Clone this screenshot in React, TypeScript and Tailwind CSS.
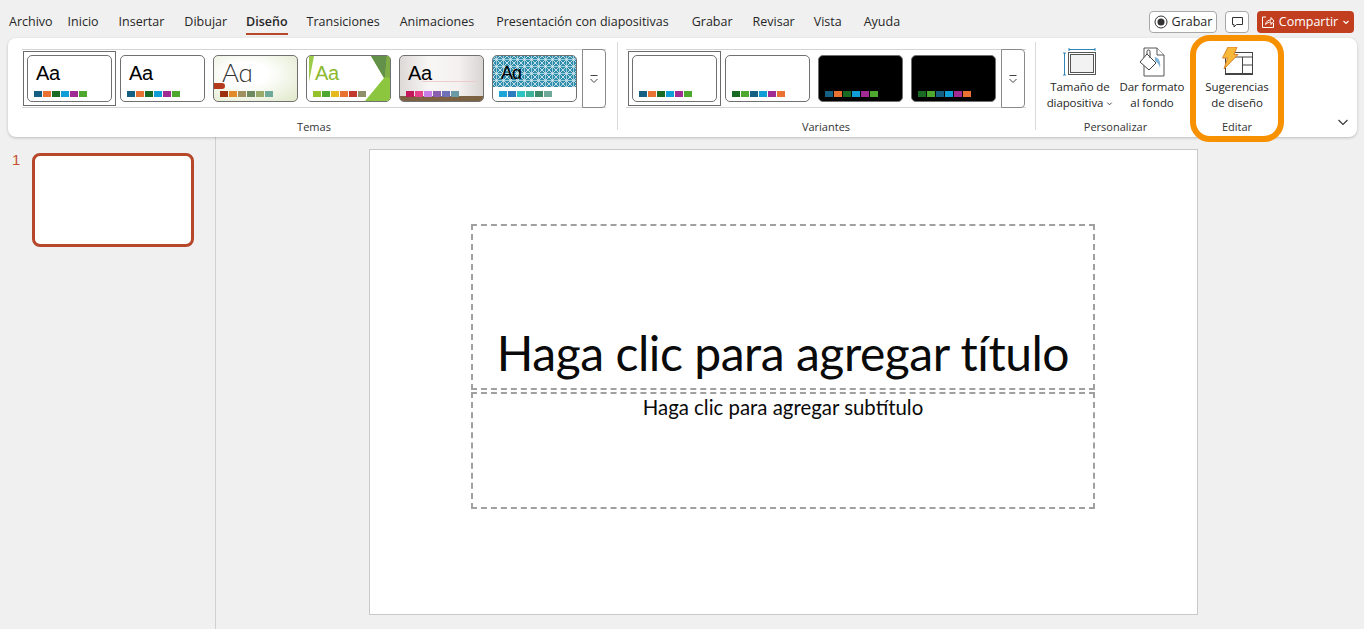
import { ReactNode } from 'react'

const tabs = [
  { label: 'Archivo', gap: 'ml-[9px]' },
  { label: 'Inicio', gap: 'ml-[15px]' },
  { label: 'Insertar', gap: 'ml-[20px]' },
  { label: 'Dibujar', gap: 'ml-[20px]' },
  { label: 'Diseño', gap: 'ml-[19px]', active: true },
  { label: 'Transiciones', gap: 'ml-[19px]' },
  { label: 'Animaciones', gap: 'ml-[20px]' },
  { label: 'Presentación con diapositivas', gap: 'ml-[22px]' },
  { label: 'Grabar', gap: 'ml-[23px]' },
  { label: 'Revisar', gap: 'ml-[20px]' },
  { label: 'Vista', gap: 'ml-[19px]' },
  { label: 'Ayuda', gap: 'ml-[22px]' },
]

const office = ['#156082', '#e97132', '#196b24', '#0f9ed5', '#a02b93', '#4ea72e']
const officeAlt = ['#196b24', '#4ea72e', '#156082', '#0f9ed5', '#a02b93', '#e97132']

function Swatches({ colors }: { colors: string[] }) {
  return (
    <div className="flex gap-px">
      {colors.map((c, i) => (
        <div key={i} className="w-[8px] h-[6px]" style={{ backgroundColor: c }} />
      ))}
    </div>
  )
}

function Thumb({
  colors,
  selected,
  bg = 'bg-white',
  art,
  children,
}: {
  colors: string[]
  selected?: boolean
  bg?: string
  art?: ReactNode
  children?: ReactNode
}) {
  return (
    <div className={`w-[93px] h-[55px] flex items-center justify-center border ${selected ? 'border-[#6b6b6b]' : 'border-transparent'}`}>
      <div className={`relative w-[85px] h-[47px] rounded-[5px] border border-[#707070] overflow-hidden ${bg}`}>
        {art}
        <div className="relative flex flex-col h-full pl-[6px] pt-[4px]">
          <div className="h-[31px]">{children}</div>
          <Swatches colors={colors} />
        </div>
      </div>
    </div>
  )
}

function Aa({ className = '', text = 'Aa' }: { className?: string; text?: string }) {
  return <div className={`text-[20px] leading-[26px] pl-[2px] tracking-[-0.4px] ${className}`}>{text}</div>
}

function MoreButton() {
  return (
    <div className="ml-px w-[24px] h-[59px] -my-px border border-[#8a8a8a] rounded-r-[4px] bg-white flex items-center justify-center">
      <svg width="10" height="10" viewBox="0 0 10 10" fill="none" stroke="#444" strokeWidth="1">
        <path d="M1.5 1.5h7M1.5 5l3.5 3.5L8.5 5" />
      </svg>
    </div>
  )
}

function GreenArt() {
  return (
    <svg className="absolute inset-0" width="83" height="45" viewBox="0 0 83 45">
      <path d="M2 0h5L2 26z" fill="#9ccb4a" />
      <path d="M64 0H83V45H58L77 22z" fill="#8cc63f" />
      <path d="M64 0H80L78 21l-1 1z" fill="#63914a" />
      <path d="M80 0h3v22l-5-1z" fill="#7fae45" />
    </svg>
  )
}

function PatternArt() {
  return (
    <svg className="absolute inset-x-0 top-0" width="83" height="31" viewBox="0 0 83 31">
      <defs>
        <pattern id="tiles" width="7" height="7" patternUnits="userSpaceOnUse">
          <rect width="7" height="7" fill="#2f8fad" />
          <path d="M3.5 0.5L6.5 3.5 3.5 6.5 0.5 3.5z" fill="#1c7d9b" />
          <path d="M3.5 0v7M0 3.5h7" stroke="#bfe0ea" strokeWidth="0.8" />
          <path d="M0 0l7 7M7 0L0 7" stroke="#e6f3f7" strokeWidth="0.8" />
        </pattern>
      </defs>
      <rect width="83" height="31" fill="url(#tiles)" />
    </svg>
  )
}

function RibbonLabel({ children }: { children: ReactNode }) {
  return <div className="h-[14px] leading-[14px] text-[11px] text-center text-[#333]">{children}</div>
}

function Separator() {
  return <div className="w-px h-[88px] mt-[4px] bg-[#d9d9d9]" />
}

function SlideSizeIcon() {
  return (
    <svg width="34" height="28" viewBox="0 0 34 28" fill="none">
      <path d="M6 1.5h26M6 0v3M32 0v3M1.5 5v22M0 5h3M0 27h3" stroke="#2e86b8" strokeWidth="1" />
      <rect x="5.5" y="4.5" width="27" height="22" stroke="#555" strokeWidth="1" fill="#fff" />
      <rect x="7.5" y="6.5" width="23" height="18" stroke="#555" strokeWidth="1" fill="#f2f2f2" />
    </svg>
  )
}

function FormatBgIcon() {
  return (
    <svg width="28" height="30" viewBox="0 0 28 30" fill="none">
      <path d="M6 1h13l7 7v21H6z" fill="#fff" stroke="#555" strokeWidth="1" />
      <path d="M19 1v7h7" stroke="#555" strokeWidth="1" fill="#fff" />
      <path d="M9 7l9 9-7 7-9-8z" fill="#fff" stroke="#444" strokeWidth="1" />
      <path d="M9 8V4.5a1.5 1.5 0 0 1 3 0V11" stroke="#444" strokeWidth="1" />
      <path d="M17 10c4 1 6 5 5 11-1-4-3-6-5-7z" fill="#7fb2d9" />
    </svg>
  )
}

function DesignerIcon() {
  return (
    <svg width="32" height="30" viewBox="0 0 32 30" fill="none">
      <rect x="4.5" y="5.5" width="27" height="21" fill="#fff" stroke="#444" strokeWidth="1" />
      <path d="M4 10h27M21.5 10v16M21.5 18h10" stroke="#444" strokeWidth="1" />
      <rect x="4" y="26" width="28" height="2" fill="#444" />
      <path d="M7 0h9l-3 7.5h4L3 22l3.5-11H1.500z" fill="#f8b93a" stroke="#d9822b" strokeWidth="1" />
    </svg>
  )
}

export default function App() {
  return (
    <div className="w-[1364px] h-[629px] overflow-hidden bg-[#f0f0f0] font-['Open_Sans',sans-serif] text-[#262626] flex flex-col relative">
      {/* Menu bar */}
      <div className="h-[38px] flex shrink-0 text-[12.5px]">
        {tabs.map(t => (
          <div
            key={t.label}
            className={`${t.gap} pt-[11px] h-[35px] leading-[22px] border-b-2 whitespace-nowrap ${t.active ? 'border-[#b7472a] font-semibold' : 'border-transparent'}`}
          >
            {t.label}
          </div>
        ))}
        <div className="ml-auto mr-[10px] mt-[11px] flex gap-[8px] h-[22px]">
          <div className="w-[68px] flex items-center justify-center gap-[4px] bg-white border border-[#a8a8a8] rounded-[4px] text-[12.5px]">
            <svg width="14" height="14" viewBox="0 0 14 14" fill="none">
              <circle cx="7" cy="7" r="6" stroke="#333" strokeWidth="1" />
              <circle cx="7" cy="7" r="3.5" fill="#333" />
            </svg>
            Grabar
          </div>
          <div className="w-[24px] flex items-center justify-center bg-white border border-[#a8a8a8] rounded-[4px]">
            <svg width="13" height="13" viewBox="0 0 13 13" fill="none" stroke="#333" strokeWidth="1">
              <path d="M1.5 1.5h10v7H5.500L3 11V8.500H1.500z" />
            </svg>
          </div>
          <div className="w-[97px] flex items-center justify-center gap-[4px] bg-[#c13f1f] rounded-[4px] text-white text-[12.5px]">
            <svg width="14" height="14" viewBox="0 0 14 14" fill="none" stroke="#fff" strokeWidth="1">
              <path d="M5 2H1.500v10.500h11V8" />
              <path d="M4.500 9.500C5 6.500 7 5 10 5V2.500L13 6l-3 3.500V7C8 7 6 8 4.500 9.500z" />
            </svg>
            Compartir
            <svg width="8" height="8" viewBox="0 0 8 8" fill="none" stroke="#fff" strokeWidth="1.2">
              <path d="M1.500 3l2.500 2.500L6.500 3" />
            </svg>
          </div>
        </div>
      </div>

      {/* Ribbon */}
      <div className="relative z-10 ml-[8px] w-[1349px] h-[99px] shrink-0 bg-white rounded-[8px] shadow-[0_1px_3px_rgba(0,0,0,0.22)] flex text-[11.5px]">
        {/* Temas */}
        <div className="ml-[14px] mt-[11px] w-[584px] flex flex-col">
          <div className="flex items-center h-[59px] border-y border-[#d4d4d4] pl-px">
            <Thumb colors={office} selected>
              <Aa className="text-black font-['Liberation_Sans',sans-serif]" />
            </Thumb>
            <Thumb colors={office}>
              <Aa className="text-black font-['Liberation_Sans',sans-serif]" />
            </Thumb>
            <Thumb
              colors={['#9c2f0e', '#e08a2a', '#a08f5f', '#6f8a5f', '#9aaa6a', '#6fa99a']}
              bg="bg-[radial-gradient(ellipse_at_40%_40%,#ffffff_30%,#dfe8c9_100%)]"
              art={<div className="absolute left-0 top-[27px] w-[11px] h-[6px] rounded-r-[3px] bg-[#b5391b]" />}
            >
              <div className="text-[26px] leading-[24px] pl-[2px] tracking-[-0.5px] text-[#333] font-light font-['Lato',sans-serif]">Aɑ</div>
            </Thumb>
            <Thumb colors={['#95c12b', '#4ea72e', '#e6b91e', '#e97132', '#c13a2d', '#8f8f6a']} art={<GreenArt />}>
              <Aa className="text-[#8cb92f] font-['Liberation_Sans',sans-serif]" />
            </Thumb>
            <Thumb
              colors={['#c2185b', '#e5408a', '#c77ee8', '#8b5fb0', '#6f70b8', '#6a9aa5']}
              bg="bg-[linear-gradient(90deg,#ddd9d7,#f8f7f6_35%,#f4f1f0_70%,#d9d5d3)]"
              art={
                <>
                  <div className="absolute left-[22px] right-[6px] top-[25px] h-px bg-[#eccdcd]" />
                  <div className="absolute left-0 right-0 bottom-0 h-[5px] bg-[#7c6142]" />
                </>
              }
            >
              <Aa className="text-black font-['Liberation_Sans',sans-serif]" />
            </Thumb>
            <Thumb colors={['#1ea5d8', '#2b7dbf', '#2fc4c4', '#3fb39a', '#3f8a68', '#6fa99a']} art={<PatternArt />}>
              <div className="text-[18px] leading-[26px] pl-[2px] tracking-[-1px] text-black font-medium font-['Liberation_Sans',sans-serif]">Aɑ</div>
            </Thumb>
            <MoreButton />
          </div>
          <div className="mt-[12px]">
            <RibbonLabel>Temas</RibbonLabel>
          </div>
        </div>

        <div className="ml-[11px]">
          <Separator />
        </div>

        {/* Variantes */}
        <div className="ml-[8px] mt-[11px] w-[400px] flex flex-col">
          <div className="flex items-center h-[59px] border-y border-[#d4d4d4] pl-[2px]">
            <Thumb colors={office} selected />
            <Thumb colors={officeAlt} />
            <Thumb colors={office} bg="bg-black" />
            <Thumb colors={officeAlt} bg="bg-black" />
            <MoreButton />
          </div>
          <div className="mt-[12px]">
            <RibbonLabel>Variantes</RibbonLabel>
          </div>
        </div>

        <div className="ml-[9px]">
          <Separator />
        </div>

        {/* Personalizar */}
        <div className="w-[154px] flex flex-col">
          <div className="h-[82px] flex">
            <div className="w-[90px] -ml-px flex flex-col items-center pt-[8px]">
              <div className="h-[32px] flex items-center">
                <SlideSizeIcon />
              </div>
              <div className="leading-[16px] text-center mt-[1px] tracking-[-0.1px]">
                Tamaño de
                <br />
                diapositiva
                <svg className="inline ml-[3px]" width="7" height="7" viewBox="0 0 8 8" fill="none" stroke="#444" strokeWidth="1.1">
                  <path d="M1.500 3l2.500 2.500L6.500 3" />
                </svg>
              </div>
            </div>
            <div className="w-[66px] -ml-[6px] flex flex-col items-center pt-[7px]">
              <div className="h-[33px] flex items-center">
                <FormatBgIcon />
              </div>
              <div className="leading-[16px] text-center mt-[1px] whitespace-nowrap tracking-[-0.1px]">
                Dar formato
                <br />
                al fondo
              </div>
            </div>
          </div>
          <div className="pl-[5px]">
            <RibbonLabel>Personalizar</RibbonLabel>
          </div>
        </div>

        {/* Editar */}
        <div className="w-[90px] flex flex-col ml-[2px]">
          <div className="h-[82px] flex flex-col items-center pt-[6px]">
            <div className="h-[35px] flex items-center">
              <DesignerIcon />
            </div>
            <div className="leading-[16px] text-center whitespace-nowrap tracking-[-0.1px]">
              Sugerencias
              <br />
              de diseño
            </div>
          </div>
          <RibbonLabel>Editar</RibbonLabel>
        </div>

        <svg className="absolute right-[8px] bottom-[9px]" width="12" height="12" viewBox="0 0 12 12" fill="none" stroke="#333" strokeWidth="1.1">
          <path d="M1.500 4l4.500 4.500L10.500 4" />
        </svg>
      </div>

      {/* Highlight around Sugerencias de diseño */}
      <div className="absolute z-20 left-[1190px] top-[35px] w-[94px] h-[107px] border-[6px] border-[#f79100] rounded-[20px]" />

      {/* Workspace */}
      <div className="flex-1 flex min-h-0">
        <div className="w-[216px] border-r border-[#d0d0d0] flex items-start pt-[16px] pl-[12px] shrink-0">
          <div className="w-[20px] -mt-px text-[15px] leading-[15px] text-[#c5502f] font-['Liberation_Sans',sans-serif]">1</div>
          <div className="w-[162px] h-[94px] bg-white border-[3px] border-[#b7472a] rounded-[8px]" />
        </div>
        <div className="flex-1 pl-[153px] pt-[12px]">
          <div className="w-[829px] h-[466px] bg-white border border-[#c9c9c9] flex flex-col items-center pt-[74px] pr-px font-['Lato',sans-serif] text-[#0a0a0a]">
            <div className="w-[624px] h-[166px] border-2 border-dashed border-[#a0a0a0] flex items-end justify-center pb-[6px]">
              <div className="text-[48px] leading-[58px] whitespace-nowrap tracking-[-0.45px]">Haga clic para agregar título</div>
            </div>
            <div className="w-[624px] h-[117px] mt-[2px] border-2 border-dashed border-[#a0a0a0] text-center text-[20.4px] leading-[26px]">
              Haga clic para agregar subtítulo
            </div>
          </div>
        </div>
      </div>
    </div>
  )
}
